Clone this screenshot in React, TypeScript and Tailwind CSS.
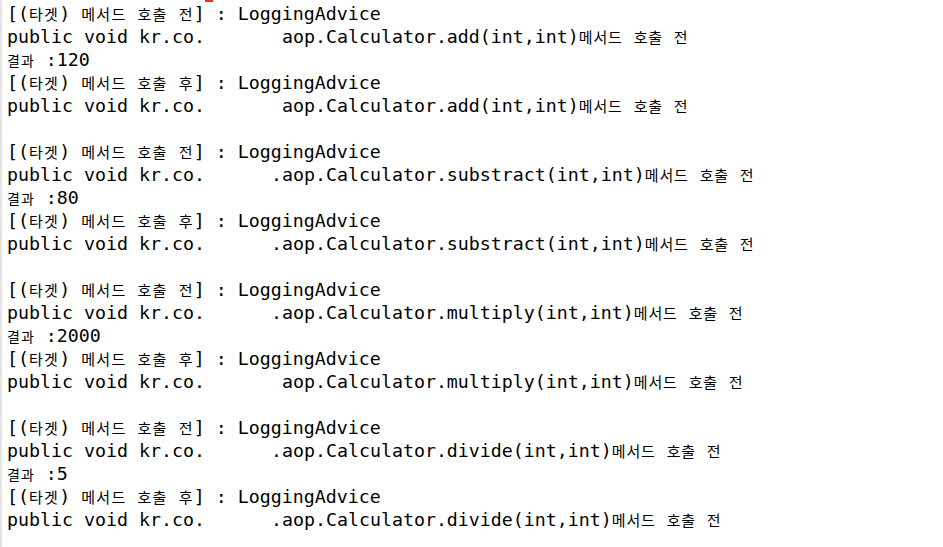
import React from "react";

type Kind = "head" | "call" | "result" | "blank";
type Line = { text: string; kind: Kind };

const blocks: { method: string; first: string; second: string; result: string }[] = [
  { method: "add", first: "       aop", second: "       aop", result: "120" },
  { method: "substract", first: "      .aop", second: "      .aop", result: "80" },
  { method: "multiply", first: "      .aop", second: "       aop", result: "2000" },
  { method: "divide", first: "      .aop", second: "      .aop", result: "5" },
];

const lines: Line[] = [];
blocks.forEach((b, i) => {
  if (i > 0) lines.push({ text: "", kind: "blank" });
  lines.push({ text: "[(타겟) 메서드 호출 전] : LoggingAdvice", kind: "head" });
  lines.push({ text: `public void kr.co.${b.first}.Calculator.${b.method}(int,int)메서드 호출 전`, kind: "call" });
  lines.push({ text: `결과 :${b.result}`, kind: "result" });
  lines.push({ text: "[(타겟) 메서드 호출 후] : LoggingAdvice", kind: "head" });
  lines.push({ text: `public void kr.co.${b.second}.Calculator.${b.method}(int,int)메서드 호출 전`, kind: "call" });
});

function splitRuns(s: string) {
  const out: { ko: boolean; t: string }[] = [];
  for (const ch of s) {
    const ko = /[\uAC00-\uD7A3]/.test(ch);
    const last = out[out.length - 1];
    if (last && last.ko === ko) last.t += ch;
    else out.push({ ko, t: ch });
  }
  return out;
}

const koClass: Record<Kind, string> = {
  head: "font-['Noto_Sans_CJK_KR',sans-serif] text-[15px] tracking-[1.3px]",
  call: "font-['Noto_Sans_CJK_KR',sans-serif] text-[15px] tracking-[0.8px]",
  result: "font-['Noto_Sans_CJK_KR',sans-serif] text-[14px] tracking-[1px]",
  blank: "",
};

function ConsoleLine({ line }: { line: Line }) {
  const runs = splitRuns(line.text);
  return (
    <div className="h-[23px] leading-[23px] whitespace-pre">
      {runs.map((r, i) =>
        r.ko ? (
          <span key={i} className={koClass[line.kind]}>
            {r.t}
          </span>
        ) : (
          <span key={i}>{r.t}</span>
        )
      )}
      {line.text === "" ? " " : null}
    </div>
  );
}

export default function App() {
  return (
    <div className="relative w-[943px] h-[547px] overflow-hidden bg-white border-l-[2px] border-[#e4e4e4]">
      <div className="absolute left-[203px] top-0 w-[8px] h-[2px] bg-[#e03030]" />
      <div className="pl-[5px] pt-[2px] font-['DejaVu_Sans_Mono',monospace] text-[18.27px] text-black">
        {lines.map((l, i) => (
          <ConsoleLine key={i} line={l} />
        ))}
      </div>
    </div>
  );
}
